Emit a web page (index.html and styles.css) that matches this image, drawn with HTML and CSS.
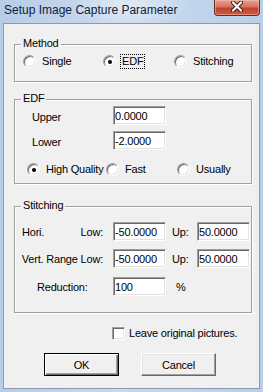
FILE: index.html
```html
<!DOCTYPE html>
<html>
<head>
<meta charset="utf-8">
<link rel="stylesheet" href="styles.css">
</head>
<body>
<div class="window">
  <div class="titlebar">
    <span class="title">Setup Image Capture Parameter</span>
    <span class="close">
      <svg width="14" height="11" viewBox="0 0 14 11">
        <path d="M3 1.5 L11 9.5 M11 1.5 L3 9.5" stroke="#3b1a16" stroke-width="4" stroke-linecap="round"/>
        <path d="M3 1.5 L11 9.5 M11 1.5 L3 9.5" stroke="#ffffff" stroke-width="2.2" stroke-linecap="round"/>
      </svg>
    </span>
  </div>
  <div class="client">
    <div class="group g-method">
      <div class="legend">Method</div>
      <div class="radios r-method">
        <div class="radio w80"><span class="rb"></span><span class="rl">Single</span></div>
        <div class="radio w71"><span class="rb on"></span><span class="rl focus">EDF</span></div>
        <div class="radio"><span class="rb"></span><span class="rl">Stitching</span></div>
      </div>
    </div>

    <div class="group g-edf">
      <div class="legend">EDF</div>
      <div class="row r-first">
        <span class="lab lab-edf">Upper</span>
        <input class="edit" value="0.0000">
      </div>
      <div class="row r-gap6">
        <span class="lab lab-edf">Lower</span>
        <input class="edit" value="-2.0000">
      </div>
      <div class="radios r-edf">
        <div class="radio w79"><span class="rb on"></span><span class="rl">High Quality</span></div>
        <div class="radio w71"><span class="rb"></span><span class="rl">Fast</span></div>
        <div class="radio"><span class="rb"></span><span class="rl">Usually</span></div>
      </div>
    </div>

    <div class="group g-stitch">
      <div class="legend">Stitching</div>
      <div class="row r-first2">
        <span class="lab lab-st between"><span>Hori.</span><span>Low:</span></span>
        <input class="edit" value="-50.0000">
        <span class="up">Up:</span>
        <input class="edit" value="50.0000">
      </div>
      <div class="row r-gap8">
        <span class="lab lab-st end">Vert. Range Low:</span>
        <input class="edit" value="-50.0000">
        <span class="up">Up:</span>
        <input class="edit" value="50.0000">
      </div>
      <div class="row r-gap9">
        <span class="lab lab-st red">Reduction:</span>
        <input class="edit" value="100">
        <span class="pct">%</span>
      </div>
    </div>

    <div class="check-row">
      <span class="cb"></span><span class="cl">Leave original pictures.</span>
    </div>

    <div class="buttons">
      <button class="btn default">OK</button>
      <button class="btn">Cancel</button>
    </div>
  </div>
</div>
</body>
</html>
```
FILE: styles.css
```css
html, body {
  margin: 0;
  padding: 0;
}
body {
  width: 263px;
  height: 392px;
  overflow: hidden;
  font-family: "Liberation Sans", Arial, sans-serif;
  font-size: 11px;
  line-height: 13px;
  letter-spacing: -0.2px;
  white-space: nowrap;
  color: #000;
}
.window {
  width: 263px;
  height: 392px;
  box-sizing: border-box;
  padding: 0 3px 3px 3px;
  display: flex;
  flex-direction: column;
  background:
    radial-gradient(ellipse 60px 22px at 130px 6px, rgba(235,242,250,0.75), rgba(235,242,250,0) 100%),
    linear-gradient(90deg, #b7cde7 0%, #c8d9ee 45%, #c2d5ec 70%, #b9cfe9 100%);
}
.titlebar {
  height: 23px;
  display: flex;
  align-items: flex-start;
  flex: none;
}
.title {
  font-family: "Liberation Sans", Arial, sans-serif;
  font-size: 12px;
  line-height: 15px;
  letter-spacing: 0;
  margin: 3px 0 0 1px;
  color: #10213a;
}
.close {
  margin-left: auto;
  width: 46px;
  height: 16px;
  box-sizing: border-box;
  border: 1px solid #6e2a22;
  border-top: none;
  border-radius: 0 0 4px 4px;
  background: linear-gradient(#e6a392 0%, #d7735f 45%, #c1432d 55%, #cf5a45 100%);
  box-shadow: inset 0 0 0 1px rgba(255,200,190,0.45);
  display: flex;
  align-items: center;
  justify-content: center;
}
.close svg {
  display: block;
  margin-top: -2px;
}
.client {
  flex: 1;
  background: #f0f0f0;
  border: 1px solid #8a9bb0;
  display: flex;
  flex-direction: column;
}
.group {
  margin-left: 10px;
  width: 238px;
  box-sizing: border-box;
  border: 1px solid #a0a0a0;
  box-shadow: inset 1px 1px 0 #fff, 1px 1px 0 #fff;
}
.g-method {
  margin-top: 20px;
  padding-bottom: 13px;
}
.g-edf {
  margin-top: 17px;
  padding-bottom: 7px;
}
.g-stitch {
  margin-top: 22px;
  padding-bottom: 16px;
}
.legend {
  margin: -8px 0 0 6px;
  padding: 0 2px;
  width: max-content;
  background: #f0f0f0;
}
.radios {
  display: flex;
  height: 13px;
}
.r-method {
  margin-top: 5px;
  padding-left: 8px;
}
.r-edf {
  margin-top: 13px;
  padding-left: 12px;
}
.radio {
  display: flex;
  align-items: center;
  flex: none;
}
.w80 { width: 80px; }
.w79 { width: 79px; }
.w71 { width: 71px; }
.rb {
  width: 13px;
  height: 13px;
  box-sizing: border-box;
  border-radius: 50%;
  border: 1px solid;
  border-color: #a0a0a0 #ffffff #ffffff #a0a0a0;
  box-shadow: inset 1px 1px 0 #696969, inset -1px -1px 0 #e3e3e3;
  background: #fff;
  margin-right: 4px;
  position: relative;
  flex: none;
}
.rb.on::after {
  content: "";
  position: absolute;
  left: 3.5px;
  top: 3.5px;
  width: 4px;
  height: 4px;
  border-radius: 50%;
  background: #000;
}
.rl {
  border: 1px dotted transparent;
  padding: 0 1px;
  line-height: 13px;
}
.rl.focus {
  border-color: #000;
}
.row {
  display: flex;
  align-items: center;
  height: 19px;
}
.r-first { margin-top: 1px; }
.r-gap6 { margin-top: 6px; }
.r-first2 { margin-top: 10px; }
.r-gap8 { margin-top: 8px; }
.r-gap9 { margin-top: 9px; }
.lab {
  width: 98px;
  box-sizing: border-box;
  flex: none;
  display: flex;
}
.lab-edf {
  padding-left: 17px;
  margin-top: 3px;
}
.lab-st {
  margin-top: 2px;
}
.between {
  justify-content: space-between;
  padding: 0 10px 0 7px;
}
.end {
  justify-content: flex-end;
  padding-right: 10px;
}
.red {
  padding-left: 22px;
}
.edit {
  width: 53px;
  height: 19px;
  box-sizing: border-box;
  margin: 0;
  padding: 0 0 0 1px;
  border: 1px solid;
  border-color: #a0a0a0 #ffffff #ffffff #a0a0a0;
  box-shadow: inset 1px 1px 0 #696969, inset -1px -1px 0 #e3e3e3;
  background: #fff;
  font-family: "Liberation Sans", Arial, sans-serif;
  font-size: 11px;
  letter-spacing: -0.2px;
  color: #000;
  outline: none;
  flex: none;
}
.up {
  width: 31px;
  box-sizing: border-box;
  padding-left: 6px;
  margin-top: 2px;
  flex: none;
}
.pct {
  padding-left: 10px;
  margin-top: 2px;
}
.check-row {
  display: flex;
  align-items: center;
  height: 13px;
  margin-top: 14px;
  padding-left: 108px;
}
.cb {
  width: 13px;
  height: 13px;
  box-sizing: border-box;
  border: 1px solid;
  border-color: #a0a0a0 #ffffff #ffffff #a0a0a0;
  box-shadow: inset 1px 1px 0 #696969, inset -1px -1px 0 #e3e3e3;
  background: #fff;
  flex: none;
}
.cl {
  margin-left: 4px;
}
.buttons {
  display: flex;
  gap: 22px;
  margin-top: 13px;
  padding-left: 40px;
}
.btn {
  width: 75px;
  height: 23px;
  box-sizing: border-box;
  margin: 0;
  padding: 0;
  background: #f0f0f0;
  font-family: "Liberation Sans", Arial, sans-serif;
  font-size: 11px;
  letter-spacing: -0.2px;
  color: #000;
  border: 1px solid;
  border-color: #ffffff #696969 #696969 #ffffff;
  box-shadow: inset -1px -1px 0 #a0a0a0, inset 1px 1px 0 #e3e3e3;
}
.btn.default {
  border: 1px solid #000;
  box-shadow: inset 1px 1px 0 #fff, inset -1px -1px 0 #696969, inset -2px -2px 0 #a0a0a0;
}
```
